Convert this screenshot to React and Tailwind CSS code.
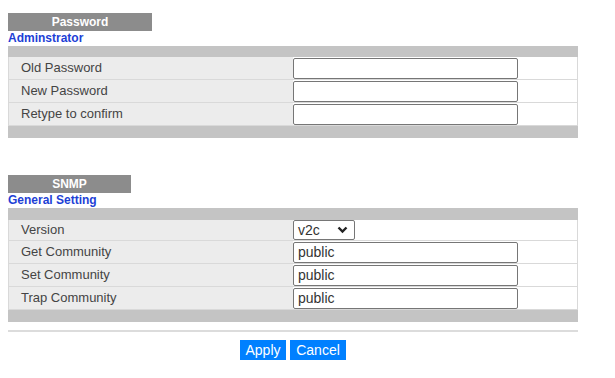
import React from "react";

const font = { fontFamily: '"Liberation Sans", Arial, sans-serif' };

const SectionHead = ({ title, width, sub }) => (
  <div>
    <div className={`${width} h-[18px] bg-[#8c8c8c] text-white font-bold text-[12px] leading-[18px] text-center`}>
      {title}
    </div>
    <div className="h-[15px] text-[12px] leading-[15px] font-bold text-[#1d3fd6]">{sub}</div>
  </div>
);

const Row = ({ label, children, h = "h-[23px]" }) => (
  <div className={`flex ${h} border-b border-[#d9d9d9]`}>
    <div className="w-[284px] bg-[#ececec] pl-[12px] text-[13px] text-[#444] flex items-center">
      {label}
    </div>
    <div className="flex-1 bg-white flex items-center">{children}</div>
  </div>
);

const TextBox = ({ value = "" }) => (
  <div className="w-[225px] h-[21px] border border-[#767676] rounded-[2px] bg-white px-[4px] text-[14px] leading-[19px] text-[#333]">
    {value}
  </div>
);

const Table = ({ children, bottom = "h-[12px]", top = "h-[11px]" }) => (
  <div className="w-[570px]">
    <div className={`${top} bg-[#c4c4c4]`} />
    <div className="border-l border-r border-[#d9d9d9]">{children}</div>
    <div className={`${bottom} bg-[#c4c4c4]`} />
  </div>
);

export default function App() {
  return (
    <div className="w-[615px] h-[378px] bg-white pl-[8px] pt-[13px]" style={font}>
      <SectionHead title="Password" width="w-[144px]" sub="Adminstrator" />
      <Table>
        <Row label="Old Password"><TextBox /></Row>
        <Row label="New Password"><TextBox /></Row>
        <Row label="Retype to confirm"><TextBox /></Row>
      </Table>

      <div className="h-[37px]" />

      <SectionHead title="SNMP" width="w-[123px]" sub="General Setting" />
      <Table top="h-[12px]">
        <Row label="Version" h="h-[21px]">
          <div className="w-[62px] h-[20px] border border-[#767676] rounded-[2px] bg-white flex items-center justify-between pl-[4px] pr-[6px] text-[14px] text-[#333]">
            <span>v2c</span>
            <svg width="11" height="8" viewBox="0 0 11 8">
              <path d="M1.5 1.5 L5.5 5.5 L9.5 1.5" fill="none" stroke="#222" strokeWidth="2.4" />
            </svg>
          </div>
        </Row>
        <Row label="Get Community"><TextBox value="public" /></Row>
        <Row label="Set Community"><TextBox value="public" /></Row>
        <Row label="Trap Community"><TextBox value="public" /></Row>
      </Table>

      <div className="w-[570px] h-[2px] bg-[#dcdcdc] mt-[8px]" />

      <div className="w-[570px] flex justify-center gap-[4px] mt-[8px]">
        <button className="h-[20px] w-[46px] bg-[#0080ff] text-white text-[14px] leading-[20px]">Apply</button>
        <button className="h-[20px] w-[56px] bg-[#0080ff] text-white text-[14px] leading-[20px]">Cancel</button>
      </div>
    </div>
  );
}
